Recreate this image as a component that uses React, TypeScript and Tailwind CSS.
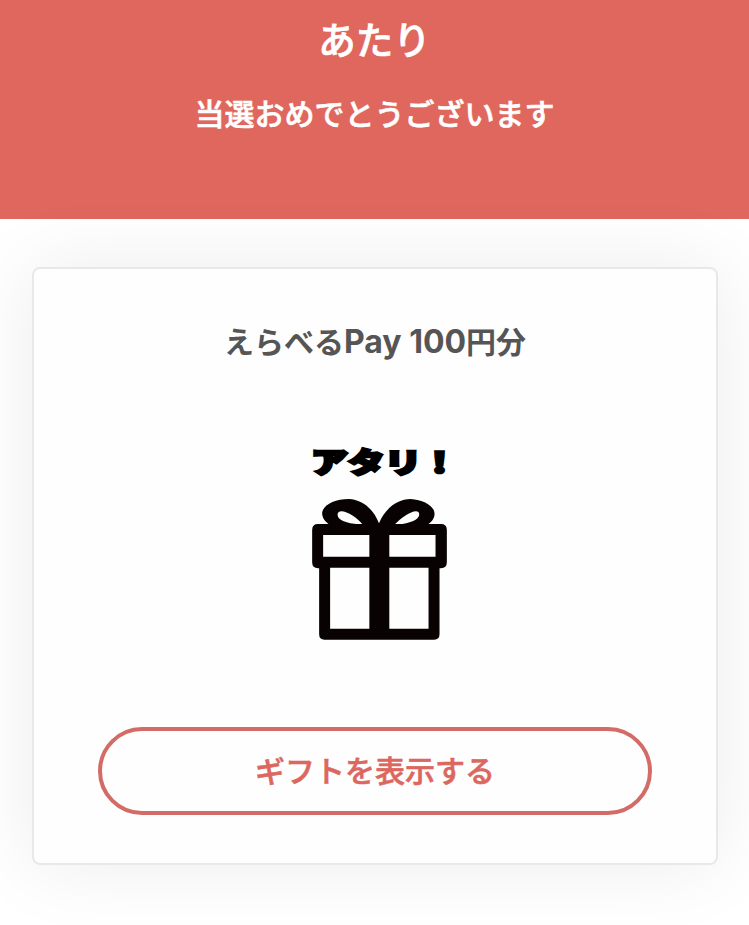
function GiftIcon({ className }: { className?: string }) {
  return (
    <svg className={className} viewBox="66 54 405 424" fill="none">
      {/* Ribbon */}
      <path
        fill="#080202"
        fillRule="evenodd"
        d="M120 132C104 122 96 110 96 96C98 72 134 54 176 54C218 56 250 84 267 127C286 82 322 54 362 54C402 56 434 76 434 98C434 112 426 122 412 132L298 140H236ZM217 130C204 112 172 91 154 91C144 91 140 98 144 108C150 121 184 130 217 130ZM314 131C332 112 362 91 378 91C388 91 390 99 386 107C378 121 346 130 314 131Z"
      />
      {/* Box and lid */}
      <path
        fill="#080202"
        fillRule="evenodd"
        d="M84 129H453Q471 129 471 147V244Q471 262 453 262H449V461Q449 477 433 477H103Q87 477 87 461V262H84Q66 262 66 244V147Q66 129 84 129ZM99 162V228H238V162ZM298 162V228H437V162ZM120 261V444H238V261ZM298 261V444H416V261Z"
      />
    </svg>
  )
}

function PrizeArt() {
  return (
    <div className="flex flex-col items-center">
      <p className="mt-[2px] ml-[16px] h-[30px] w-[144px] origin-center scale-y-[0.76] whitespace-nowrap text-[37px] leading-[30px] font-black tracking-[-0.3px] text-black [-webkit-text-stroke:3.5px_black]">
        アタリ！
      </p>
      <GiftIcon className="mt-[21px] ml-[9px] h-[141px] w-[135px]" />
    </div>
  )
}

export default function App() {
  return (
    <main className="h-[925px] w-full overflow-hidden bg-white font-['Inter','Noto_Sans_CJK_JP',sans-serif]">
      {/* Header */}
      <header className="h-[219px] bg-[#e0675e] pt-[14px] text-center text-white">
        <h1 className="text-[37.5px] leading-[54px] font-medium [-webkit-text-stroke:0.7px_white]">
          あたり
        </h1>
        <p className="mt-[24px] text-[30px] leading-[44px] font-medium [-webkit-text-stroke:0.6px_white]">
          当選おめでとうございます
        </p>
      </header>

      {/* Prize card */}
      <section className="mx-[32px] mt-[48px] flex h-[598px] w-[686px] flex-col items-center rounded-lg border-2 border-[#e8e8e8] bg-[#fefefe] pt-[51px] shadow-[0_0_80px_rgba(0,0,0,0.08)]">
        <h2 className="text-[30px] leading-[44px] font-bold text-[#555]">
          えらべる<span className="text-[32px]">Pay 100</span>円分
        </h2>
        <div className="mt-[82px]">
          <PrizeArt />
        </div>
        <button className="mt-[87px] h-[88px] w-[554px] rounded-full border-4 border-[#d36b66] pt-px text-[30px] font-medium text-[#dc675f] [-webkit-text-stroke:0.6px_#dc675f]">
          ギフトを表示する
        </button>
      </section>
    </main>
  )
}
